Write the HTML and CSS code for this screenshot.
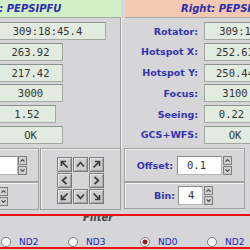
FILE: index.html
```html
<!DOCTYPE html>
<html>
<head>
<meta charset="utf-8">
<link rel="stylesheet" href="styles.css">
</head>
<body>
<div class="screen">
  <div class="top">
    <section class="side side-left">
      <div class="hdr hdr-l"><span class="hdr-text-l">Left: PEPSIPFU</span></div>
      <div class="rows rows-l">
        <div class="val val-l val-wide-l">309:18:45.4</div>
        <div class="val val-l">263.92</div>
        <div class="val val-l">217.42</div>
        <div class="val val-l">3000</div>
        <div class="val val-l val-short-l">1.52</div>
        <div class="val val-l">OK</div>
      </div>
    </section>
    <section class="side side-right">
      <div class="hdr hdr-r">Right: PEPSIPFU</div>
      <div class="rows rows-r">
        <div class="row"><span class="lbl">Rotator:</span><span class="val val-r val-wide-r">309:18:45.4</span></div>
        <div class="row"><span class="lbl">Hotspot X:</span><span class="val val-r">252.63</span></div>
        <div class="row"><span class="lbl">Hotspot Y:</span><span class="val val-r">250.44</span></div>
        <div class="row"><span class="lbl">Focus:</span><span class="val val-r">3100</span></div>
        <div class="row"><span class="lbl">Seeing:</span><span class="val val-r val-short-r">0.22</span></div>
        <div class="row"><span class="lbl">GCS+WFS:</span><span class="val val-r">OK</span></div>
      </div>
    </section>
  </div>

  <div class="lower">
    <div class="spins">
      <div class="panel sb1">
        <div class="input in-left"></div>
        <div class="spin">
          <div class="sbtn"><svg viewBox="0 0 5 3" width="5" height="3"><path d="M0.5 2.6 L2.5 0.6 L4.5 2.6" /></svg></div>
          <div class="sbtn"><svg viewBox="0 0 5 3" width="5" height="3"><path d="M0.5 0.4 L2.5 2.4 L4.5 0.4" /></svg></div>
        </div>
      </div>
      <div class="panel sb2">
        <div class="spin">
          <div class="sbtn"><svg viewBox="0 0 5 3" width="5" height="3"><path d="M0.5 2.6 L2.5 0.6 L4.5 2.6" /></svg></div>
          <div class="sbtn"><svg viewBox="0 0 5 3" width="5" height="3"><path d="M0.5 0.4 L2.5 2.4 L4.5 0.4" /></svg></div>
        </div>
      </div>
    </div>

    <div class="panel pad">
      <div class="grid">
        <div class="abtn"><svg viewBox="0 0 9 9" width="9" height="9"><path d="M1.5 6 V1.5 H6 M1.5 1.5 L7.5 7.5"/></svg></div>
        <div class="abtn"><svg viewBox="0 0 9 9" width="9" height="9"><path d="M1 6.5 L4.5 2.5 L8 6.5"/></svg></div>
        <div class="abtn"><svg viewBox="0 0 9 9" width="9" height="9"><path d="M7.5 6 V1.5 H3 M7.5 1.5 L1.5 7.5"/></svg></div>
        <div class="abtn"><svg viewBox="0 0 9 9" width="9" height="9"><path d="M6.5 1 L2.5 4.5 L6.5 8"/></svg></div>
        <div class="gap-cell"></div>
        <div class="abtn"><svg viewBox="0 0 9 9" width="9" height="9"><path d="M2.5 1 L6.5 4.5 L2.5 8"/></svg></div>
        <div class="abtn"><svg viewBox="0 0 9 9" width="9" height="9"><path d="M1.5 3 V7.5 H6 M1.5 7.5 L7.5 1.5"/></svg></div>
        <div class="abtn"><svg viewBox="0 0 9 9" width="9" height="9"><path d="M1 2.5 L4.5 6.5 L8 2.5"/></svg></div>
        <div class="abtn"><svg viewBox="0 0 9 9" width="9" height="9"><path d="M7.5 3 V7.5 H3 M7.5 7.5 L1.5 1.5"/></svg></div>
      </div>
    </div>

    <div class="offsets">
      <div class="panel ob1">
        <span class="lbl lbl-off">Offset:</span>
        <div class="input in-off">0.1</div>
        <div class="spin">
          <div class="sbtn"><svg viewBox="0 0 5 3" width="5" height="3"><path d="M0.5 2.6 L2.5 0.6 L4.5 2.6" /></svg></div>
          <div class="sbtn"><svg viewBox="0 0 5 3" width="5" height="3"><path d="M0.5 0.4 L2.5 2.4 L4.5 0.4" /></svg></div>
        </div>
      </div>
      <div class="panel ob2">
        <span class="lbl lbl-bin">Bin:</span>
        <div class="input in-bin">4</div>
        <div class="spin">
          <div class="sbtn"><svg viewBox="0 0 5 3" width="5" height="3"><path d="M0.5 2.6 L2.5 0.6 L4.5 2.6" /></svg></div>
          <div class="sbtn"><svg viewBox="0 0 5 3" width="5" height="3"><path d="M0.5 0.4 L2.5 2.4 L4.5 0.4" /></svg></div>
        </div>
      </div>
    </div>
  </div>

  <div class="filter">
    <div class="legend">Filter</div>
    <div class="radios">
      <label class="radio r1"><span class="dot"></span>ND2</label>
      <label class="radio r2"><span class="dot"></span>ND3</label>
      <label class="radio r3"><span class="dot dot-on"></span>ND0</label>
      <label class="radio r4"><span class="dot"></span>ND2</label>
    </div>
  </div>
</div>
</body>
</html>
```

FILE: styles.css
```css
html, body {
  margin: 0;
  padding: 0;
  background: #d6d6d8;
}

.screen {
  width: 250px;
  height: 250px;
  overflow: hidden;
  background: #d6d6d8;
  font-family: "DejaVu Sans", sans-serif;
  display: flex;
  flex-direction: column;
}

/* ---------- top area ---------- */
.top {
  display: flex;
  gap: 4px;
  height: 148px;
  flex: none;
}

.side {
  flex: none;
  display: flex;
  flex-direction: column;
}

.side-left { width: 121px; }
.side-right { width: 170px; }

.hdr {
  flex: none;
  height: 17px;
  line-height: 17px;
  border-bottom: 1px solid #a8a8a8;
  overflow: hidden;
  white-space: nowrap;
  font-family: "DejaVu Sans", sans-serif;
  font-size: 10px;
  font-weight: bold;
  font-style: italic;
  color: #2c2cae;
}

.hdr-l { background: #d2f0c6; }
.hdr-text-l { margin-left: -23px; }

.hdr-r {
  background: #f3c9b1;
  padding-left: 56px;
}

.rows {
  flex: 1;
  display: flex;
  flex-direction: column;
  gap: 2.8px;
  padding-top: 4px;
}

.rows-l {
  border-right: 1px solid #9c9c9c;
  box-shadow: 1px 0 0 #f2f2f2;
  overflow: hidden;
}

.val {
  display: block;
  box-sizing: border-box;
  height: 18px;
  line-height: 16px;
  background: #e2ebdf;
  border: 1px solid #a3a8a3;
  border-top-color: #8e928e;
  font-family: "DejaVu Sans Mono", monospace;
  font-size: 10.5px;
  color: #333;
  text-align: center;
  white-space: nowrap;
  flex: none;
}

.val-l { width: 65px; margin-left: -2px; }
.val-wide-l { width: 117px; margin-left: -11px; }
.val-short-l { width: 58px; }

.row {
  display: flex;
  align-items: center;
  gap: 6px;
  height: 18px;
}

.lbl {
  flex: none;
  width: 73px;
  text-align: right;
  font-family: "DejaVu Sans", sans-serif;
  font-size: 9.5px;
  font-weight: bold;
  color: #3434ae;
  white-space: nowrap;
}

.val-r { width: 62px; }
.val-wide-r { width: 100px; }
.val-short-r { width: 55px; }

/* ---------- lower controls ---------- */
.lower {
  display: flex;
  height: 62px;
  flex: none;
}

.panel {
  box-sizing: border-box;
  border: 1px solid #a0a0a0;
  box-shadow: inset 1px 1px 0 #f3f3f3;
}

.spins {
  flex: none;
  width: 49px;
  margin-left: -10px;
  display: flex;
  flex-direction: column;
}

.sb1 {
  height: 34px;
  display: flex;
  align-items: center;
  justify-content: flex-end;
  padding-right: 11px;
}

.sb2 {
  flex: 1;
  display: flex;
  align-items: center;
  justify-content: flex-end;
  padding-right: 30px;
}

.input {
  box-sizing: border-box;
  height: 19px;
  line-height: 17px;
  background: #fff;
  border: 1px solid #8c8c8c;
  border-right-color: #b4b4b4;
  border-bottom-color: #b4b4b4;
  font-family: "DejaVu Sans Mono", monospace;
  font-size: 10.5px;
  color: #333;
  padding-left: 9px;
  flex: none;
}

.in-left { width: 30px; }
.in-off { width: 45px; margin-left: 4px; }
.in-bin { width: 25px; margin-left: 3px; }

.spin {
  flex: none;
  width: 9px;
  height: 19px;
  display: flex;
  flex-direction: column;
  gap: 1px;
}

.in-off + .spin,
.in-bin + .spin { margin-left: 1px; }

.sbtn {
  flex: 1;
  box-sizing: border-box;
  border: 1px solid #7e7e7e;
  background: #cfcfcf;
  display: flex;
  align-items: center;
  justify-content: center;
}

.sbtn svg path {
  fill: none;
  stroke: #444;
  stroke-width: 1.1;
}

.pad {
  flex: none;
  width: 81px;
  margin-left: 1px;
  padding: 8px 0 0 16px;
}

.grid {
  display: grid;
  grid-template-columns: repeat(3, 15px);
  grid-auto-rows: 15px;
  gap: 1px;
}

.abtn {
  box-sizing: border-box;
  border: 1px solid #7a7a7a;
  background: #cccccc;
  box-shadow: inset 1px 1px 0 #ececec, inset -1px -1px 0 #a2a2a2;
  display: flex;
  align-items: center;
  justify-content: center;
}

.abtn svg path {
  fill: none;
  stroke: #3c3c3c;
  stroke-width: 1.7;
  stroke-linejoin: miter;
}

.offsets {
  flex: none;
  width: 121px;
  margin-left: 3px;
  display: flex;
  flex-direction: column;
}

.ob1 {
  height: 34px;
  display: flex;
  align-items: center;
}

.ob2 {
  height: 27px;
  display: flex;
  align-items: center;
}

.lbl-off { width: 48px; }
.lbl-bin { width: 50px; }

/* ---------- filter ---------- */
.filter {
  flex: none;
  margin-top: 4px;
  height: 35px;
  box-sizing: border-box;
  border-top: 2px solid #ee1111;
  border-bottom: 2px solid #ee1111;
  overflow: hidden;
}

.legend {
  margin-top: -4px;
  height: 12px;
  line-height: 12px;
  padding-left: 83px;
  font-family: "DejaVu Sans", sans-serif;
  font-size: 10px;
  font-weight: bold;
  font-style: italic;
  color: #444;
}

.radios {
  display: flex;
  align-items: center;
  height: 10px;
  margin-top: 13px;
}

.radio {
  flex: none;
  display: flex;
  align-items: center;
  gap: 8px;
  font-family: "DejaVu Sans", sans-serif;
  font-size: 9px;
  color: #2323c0;
  white-space: nowrap;
}

.r1 { width: 67px; margin-left: 1px; }
.r2 { width: 72px; }
.r3 { width: 67px; }
.r4 { width: 60px; }

.dot {
  flex: none;
  width: 10px;
  height: 10px;
  box-sizing: border-box;
  border-radius: 50%;
  border: 1px solid #7c7c7c;
  background: #fff;
}

.dot-on {
  background: radial-gradient(circle, #a01c1c 0 2.2px, #ffffff 2.8px);
}
```
